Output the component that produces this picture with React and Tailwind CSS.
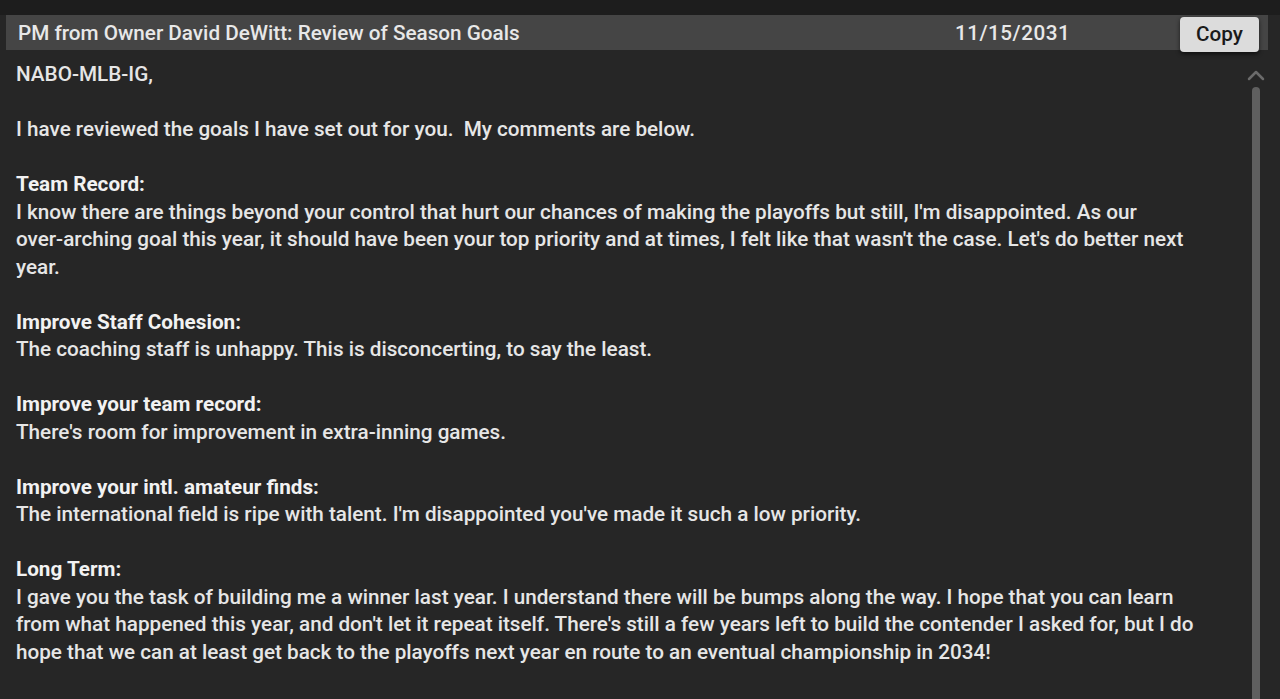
import React from "react";

const sections = [
  { type: "p", lines: ["NABO-MLB-IG,"] },
  { type: "p", lines: ["I have reviewed the goals I have set out for you.\u00a0 My comments are below."] },
  {
    title: "Team Record:",
    lines: [
      "I know there are things beyond your control that hurt our chances of making the playoffs but still, I'm disappointed. As our",
      "over-arching goal this year, it should have been your top priority and at times, I felt like that wasn't the case. Let's do better next",
      "year.",
    ],
  },
  { title: "Improve Staff Cohesion:", lines: ["The coaching staff is unhappy. This is disconcerting, to say the least."] },
  { title: "Improve your team record:", lines: ["There's room for improvement in extra-inning games."] },
  {
    title: "Improve your intl. amateur finds:",
    lines: ["The international field is ripe with talent. I'm disappointed you've made it such a low priority."],
  },
  {
    title: "Long Term:",
    lines: [
      "I gave you the task of building me a winner last year. I understand there will be bumps along the way. I hope that you can learn",
      "from what happened this year, and don't let it repeat itself. There's still a few years left to build the contender I asked for, but I do",
      "hope that we can at least get back to the playoffs next year en route to an eventual championship in 2034!",
    ],
  },
];

export default function App() {
  return (
    <div
      className="w-[1280px] h-[699px] overflow-hidden flex flex-col bg-[#1c1c1c] text-[#e6e6e6]"
      style={{ fontFamily: "Roboto, 'Noto Sans', sans-serif" }}
    >
      <div className="h-[15px] shrink-0 bg-[#1d1d1d]" />
      <div className="relative flex-1 bg-[#262626]">
        <div className="mx-[6px] mr-[12px] h-[35px] bg-[#454545] flex items-center pl-[12px] pt-[3px] text-[20.7px] font-medium text-[#e8e8e8] whitespace-nowrap">
          <span className="w-[937px]">PM from Owner David DeWitt: Review of Season Goals</span>
          <span className="tracking-[0.5px]">11/15/2031</span>
        </div>
        <button className="absolute left-[1180px] top-[2px] w-[79px] h-[35px] rounded-[4px] bg-[#dcdcdc] text-[#1a1a1a] text-[20.7px] font-medium shadow-[0_2px_4px_rgba(0,0,0,0.6)] flex items-center justify-center">
          Copy
        </button>
        <div className="pl-[16px] pt-[11px] text-[20.7px] font-medium leading-[27.5px] whitespace-nowrap">
          {sections.map((s, i) => (
            <div key={i} className="mb-[27.5px]">
              {s.title && <div className="font-bold text-[#f2f2f2]">{s.title}</div>}
              {s.lines.map((l, j) => (
                <div key={j}>{l}</div>
              ))}
            </div>
          ))}
        </div>
        <div className="absolute left-[1246px] top-[53px] w-[20px] h-[14px] flex items-center justify-center">
          <svg width="20" height="12" viewBox="0 0 20 12" fill="none">
            <path d="M3 10 L10 3 L17 10" stroke="#6b6b6b" strokeWidth="2.5" strokeLinecap="round" strokeLinejoin="round" />
          </svg>
        </div>
        <div className="absolute left-[1252px] top-[72px] w-[8px] bottom-0 rounded-t-full bg-[#5f5f5f]" />
      </div>
    </div>
  );
}
